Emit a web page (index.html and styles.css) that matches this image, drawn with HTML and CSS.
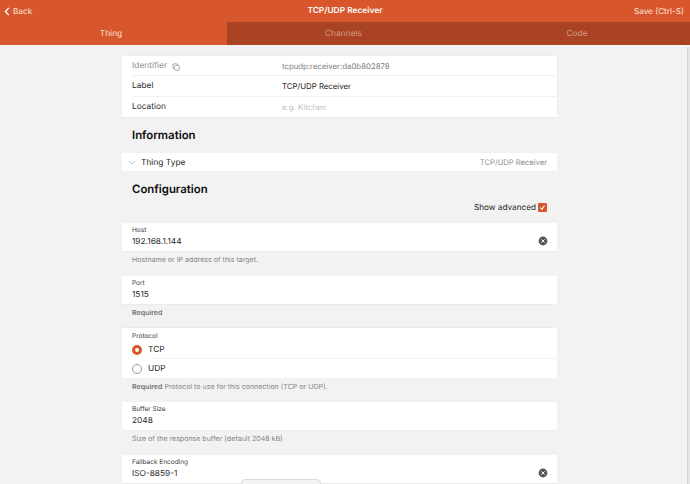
FILE: index.html
```html
<!DOCTYPE html>
<html lang="en">
<head>
<meta charset="utf-8">
<title>TCP/UDP Receiver</title>
<link rel="stylesheet" href="styles.css">
</head>
<body>
<header class="topbar">
  <nav class="navbar">
    <a class="back"><svg class="back-icon" viewBox="0 0 6 10"><path d="M5 1 1.3 5 5 9" /></svg>Back</a>
    <span class="title">TCP/UDP Receiver</span>
    <a class="save">Save (Ctrl-S)</a>
  </nav>
  <div class="tabs">
    <span class="tab tab-thing active">Thing</span>
    <span class="tab tab-channels">Channels</span>
    <span class="tab tab-code">Code</span>
  </div>
</header>
<main class="content">
  <div class="column">
    <section class="card info">
      <div class="row">
        <span class="row-label muted">Identifier
          <svg class="copy" viewBox="0 0 10 10"><rect x="1" y="1" width="6" height="6" rx="1.5"/><rect x="3" y="3" width="6" height="6" rx="1.5"/></svg>
        </span>
        <span class="row-value muted">tcpudp:receiver:da0b802878</span>
      </div>
      <div class="row">
        <span class="row-label">Label</span>
        <span class="row-value">TCP/UDP Receiver</span>
      </div>
      <div class="row">
        <span class="row-label">Location</span>
        <span class="row-value placeholder">e.g. Kitchen</span>
      </div>
    </section>
    <h2 class="heading heading-info">Information</h2>
    <section class="card type">
      <svg class="chevron" viewBox="0 0 10 6"><path d="M1 1l4 4 4-4"/></svg>
      <span class="type-label">Thing Type</span>
      <span class="type-value">TCP/UDP Receiver</span>
    </section>
    <h2 class="heading heading-config">Configuration</h2>
    <div class="advanced">
      <span>Show advanced</span>
      <span class="checkbox"><svg viewBox="0 0 10 10"><path d="M2.8 5.2 4.4 7 7.2 2.8"/></svg></span>
    </div>
    <section class="card field">
      <div class="field-main">
        <label class="field-label">Host</label>
        <div class="field-value">192.168.1.144</div>
      </div>
      <svg class="clear" viewBox="0 0 10 10"><circle cx="5" cy="5" r="4.4"/><path d="M3.4 3.4l3.2 3.2m0-3.2l-3.2 3.2"/></svg>
    </section>
    <p class="hint">Hostname or IP address of this target.</p>
    <section class="card field">
      <div class="field-main">
        <label class="field-label">Port</label>
        <div class="field-value">1515</div>
      </div>
    </section>
    <p class="hint hint-short"><b>Required</b></p>
    <section class="card protocol">
      <label class="field-label">Protocol</label>
      <div class="radio-row first"><span class="radio checked"></span><span class="radio-text">TCP</span></div>
      <div class="radio-row"><span class="radio"></span><span class="radio-text">UDP</span></div>
    </section>
    <p class="hint hint-short"><b>Required</b> Protocol to use for this connection (TCP or UDP).</p>
    <section class="card field">
      <div class="field-main">
        <label class="field-label">Buffer Size</label>
        <div class="field-value">2048</div>
      </div>
    </section>
    <p class="hint">Size of the response buffer (default 2048 kB)</p>
    <section class="card field">
      <div class="field-main">
        <label class="field-label">Fallback Encoding</label>
        <div class="field-value">ISO-8859-1</div>
      </div>
      <svg class="clear" viewBox="0 0 10 10"><circle cx="5" cy="5" r="4.4"/><path d="M3.4 3.4l3.2 3.2m0-3.2l-3.2 3.2"/></svg>
    </section>
  </div>
</main>
<div class="scrollbar"></div>
<div class="bubble"></div>
</body>
</html>
```
FILE: styles.css
```css
* { box-sizing: border-box; }
html, body { margin: 0; height: 484px; overflow: hidden; }
body {
  position: relative;
  background: #f2f2f2;
  color: #1c1c1c;
  font-family: Inter, "Liberation Sans", sans-serif;
  font-size: 8.5px;
  text-rendering: geometricPrecision;
}
.topbar { background: #d8562c; color: #fff; height: 45px; }
.navbar {
  height: 22px;
  display: flex;
  align-items: center;
  justify-content: space-between;
  padding: 0 6px 0 4px;
  position: relative;
}
.back { display: flex; align-items: center; gap: 3px; font-size: 8.2px; color: #fbe5dc; }
.back-icon { width: 6px; height: 9px; fill: none; stroke: #fff; stroke-width: 1.5; }
.title {
  position: absolute;
  left: 0; right: 0;
  text-align: center;
  font-weight: 600;
  font-size: 8.4px;
  pointer-events: none;
}
.save { font-size: 8.2px; color: #fbe5dc; }
.tabs { display: flex; height: 23px; }
.tab {
  display: flex;
  align-items: center;
  justify-content: center;
  font-size: 8.4px;
  color: #d39c88;
  background: #aa4323;
}
.tab.active { background: transparent; color: #fae0d6; }
.tab-thing { width: 227px; padding-right: 5px; }
.tab-channels { width: 233px; }
.tab-code { flex: 1; padding-left: 4px; }
.content { padding-top: 11px; }
.column { width: 435px; margin-left: 122px; }
.card { background: #fff; }
.info { height: 61px; box-shadow: 0 0 1px rgba(0,0,0,.12); }
.row {
  height: 20.33px;
  display: flex;
  align-items: center;
  margin-left: 10px;
  border-bottom: 1px solid #f1f1f1;
}
.row:last-child { border-bottom: 0; }
.row-label {
  width: 150px;
  font-size: 8.4px;
  display: flex;
  align-items: center;
  gap: 5px;
  padding-top: 1px;
  color: #2a2a2a;
}
.row-value { font-size: 7.8px; color: #222; }
.row-label.muted { color: #8f8f8f; }
.row-value.muted { color: #7d7d7d; }
.row-value.placeholder { color: #bdbdbd; }
.copy { width: 8px; height: 8px; fill: #fff; stroke: #8c8c8c; stroke-width: .9; margin-top: 1px; }
.heading { margin: 0 0 0 10px; font-size: 11.4px; font-weight: 600; color: #0d0d0d; line-height: 15px; }
.heading-info { padding-top: 11px; height: 36px; }
.heading-config { padding-top: 11px; height: 28px; }
.type {
  height: 18px;
  display: flex;
  align-items: center;
  padding: 0 10px 0 6px;
}
.chevron { width: 8px; height: 5px; fill: none; stroke: #b5b5b5; stroke-width: 1; }
.type-label { margin-left: 5px; font-size: 8.4px; color: #2a2a2a; flex: 1; padding-top: 1px; }
.type-value { font-size: 7.6px; color: #8f8f8f; }
.advanced {
  height: 16px;
  margin-bottom: 8px;
  display: flex;
  align-items: center;
  justify-content: flex-end;
  gap: 2px;
  padding-right: 10px;
  font-size: 8.2px;
  color: #1f1f1f;
}
.checkbox { width: 9px; height: 9px; background: #d8562c; border-radius: 1px; display: block; margin-top: 1px; }
.checkbox svg { display: block; width: 9px; height: 9px; fill: none; stroke: #fff; stroke-width: 1.2; }
.field {
  height: 28px;
  display: flex;
  align-items: center;
  padding: 0 9px 0 10px;
  box-shadow: 0 .5px 0 rgba(0,0,0,.06);
}
.field-main { flex: 1; align-self: flex-start; padding-top: 2.5px; }
.field-label { display: block; font-size: 6.5px; line-height: 8px; color: #3a3a3a; }
.field-value { font-size: 8.3px; line-height: 12px; margin-top: 2px; color: #1f1f1f; }
.clear { width: 10px; height: 10px; margin-top: 8px; }
.clear circle { fill: #555; }
.clear path { fill: none; stroke: #f4f4f4; stroke-width: 1; }
.hint {
  margin: 0;
  height: 25px;
  padding: 4px 10px 0;
  font-size: 7.05px;
  line-height: 10px;
  color: #868686;
}
.hint b { font-weight: 600; color: #707070; }
.hint-short { height: 24px; }
.protocol { height: 50px; padding-top: 3.5px; box-shadow: 0 -.5px 0 rgba(0,0,0,.06); }
.protocol .field-label { margin-left: 10px; }
.radio-row { height: 19.25px; display: flex; align-items: center; padding-left: 10px; }
.radio-row.first { position: relative; margin-top: .5px; }
.radio-row.first::after {
  content: "";
  position: absolute;
  left: 28px; right: 0; bottom: 0;
  border-bottom: 1px solid #f1f1f1;
}
.radio {
  width: 10px;
  height: 10px;
  border-radius: 50%;
  border: 1px solid #9a9a9a;
  background: #fff;
}
.radio.checked { border: 3px solid #d8562c; }
.radio-text { margin-left: 6px; font-size: 8.4px; color: #2a2a2a; }
.scrollbar {
  position: absolute;
  right: 0; top: 47px;
  width: 3px;
  height: 437px;
  background: #e6e6e6;
  border-left: 1px solid #d4d4d4;
}
.bubble {
  position: absolute;
  left: 241px;
  top: 479px;
  width: 80px;
  height: 8px;
  border: 1px solid #dcdcdc;
  border-radius: 4px 4px 0 0;
  background: #f3f3f3;
}
```
